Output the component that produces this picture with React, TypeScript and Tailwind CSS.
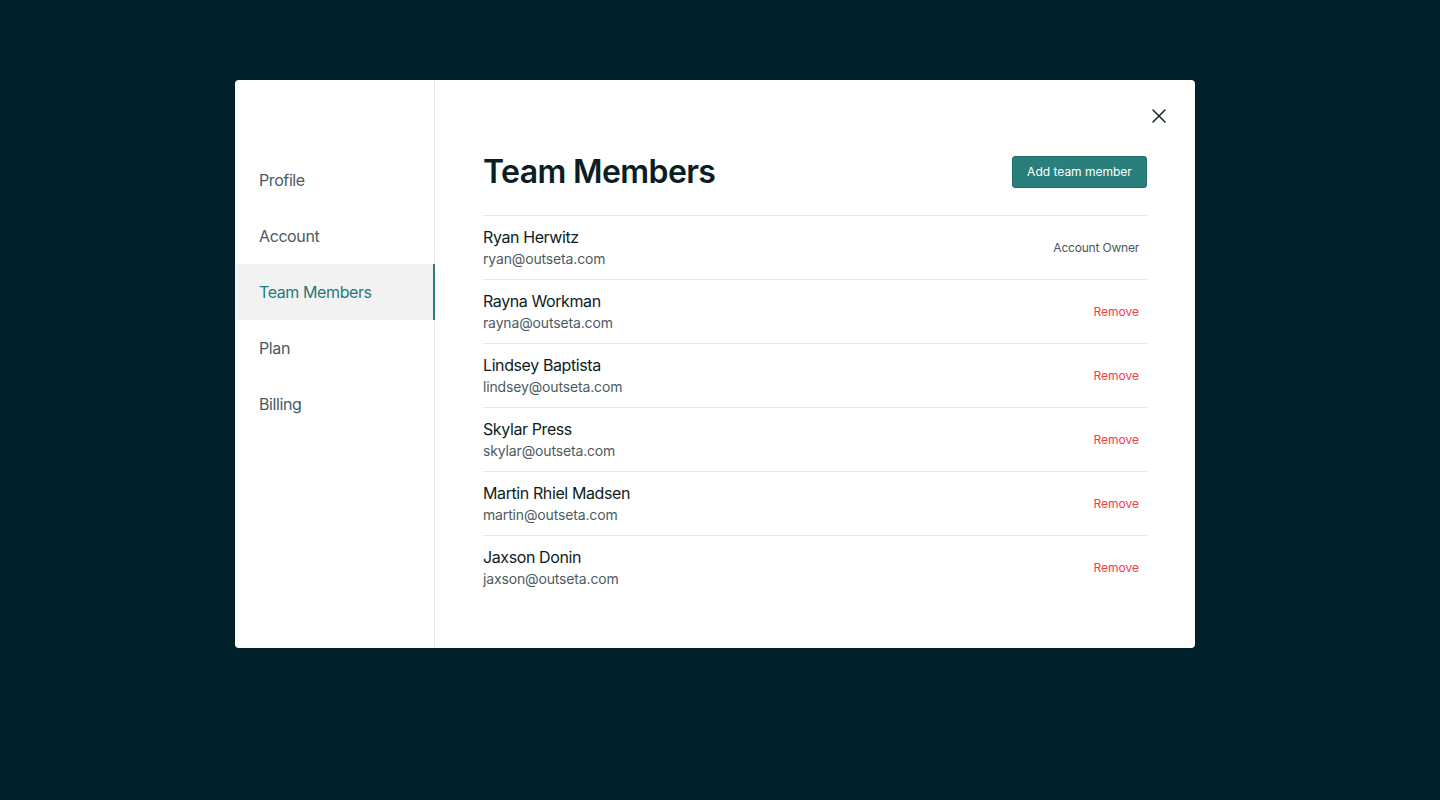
import React from "react";

const navItems = ["Profile", "Account", "Team Members", "Plan", "Billing"];

const members = [
  { name: "Ryan Herwitz", email: "ryan@outseta.com", owner: true },
  { name: "Rayna Workman", email: "rayna@outseta.com" },
  { name: "Lindsey Baptista", email: "lindsey@outseta.com" },
  { name: "Skylar Press", email: "skylar@outseta.com" },
  { name: "Martin Rhiel Madsen", email: "martin@outseta.com" },
  { name: "Jaxson Donin", email: "jaxson@outseta.com" },
];

export default function App() {
  return (
    <div className="min-h-screen w-full bg-[#00202a] flex pl-[235px] pt-20 font-['Inter',sans-serif]">
      <div className="relative flex w-[960px] h-[568px] bg-white rounded-[4px] overflow-hidden">
        {/* Sidebar */}
        <nav className="w-[200px] shrink-0 border-r border-[#e5e7e8] pt-[72px]">
          {navItems.map((item) => {
            const active = item === "Team Members";
            return (
              <div
                key={item}
                className={
                  active
                    ? "h-14 flex items-center pl-6 text-base tracking-[-0.4px] bg-[#f2f2f2] text-[#257a78] border-r-2 border-[#2b7d7b] -mr-px"
                    : "h-14 flex items-center pl-6 text-base tracking-[-0.4px] text-[#4a5a61]"
                }
              >
                {item}
              </div>
            );
          })}
        </nav>

        {/* Main */}
        <main className="flex-1 pt-[76px] px-12">
          <button
            aria-label="Close"
            className="absolute top-[27px] right-[27px] w-[18px] h-[18px] flex items-center justify-center text-[#1c2b31]"
          >
            <svg width="16" height="16" viewBox="0 0 16 16" fill="none" stroke="currentColor" strokeWidth="1.6" strokeLinecap="round">
              <path d="M2 2L14 14M14 2L2 14" />
            </svg>
          </button>

          <div className="flex items-center justify-between h-8">
            <h1 className="text-[32px] leading-none font-semibold text-[#0b1e24] tracking-[-0.6px]">Team Members</h1>
            <button className="h-8 w-[135px] rounded-[3px] bg-[#2a7f7c] border border-[#226c69] text-white text-xs">
              Add team member
            </button>
          </div>

          <div className="mt-[27px]">
            {members.map((m) => (
              <div
                key={m.email}
                className="h-16 flex items-center justify-between border-t border-[#e4e6e7]"
              >
                <div className="flex flex-col">
                  <span className="text-base leading-[22px] tracking-[-0.4px] text-[#0f1c21]">{m.name}</span>
                  <span className="text-sm leading-[22px] tracking-[-0.15px] text-[#4d5b61]">{m.email}</span>
                </div>
                {m.owner ? (
                  <span className="text-xs tracking-[-0.2px] text-[#4a565b] pr-2">Account Owner</span>
                ) : (
                  <span className="text-xs text-[#ef3b46] pr-2">Remove</span>
                )}
              </div>
            ))}
          </div>
        </main>
      </div>
    </div>
  );
}
